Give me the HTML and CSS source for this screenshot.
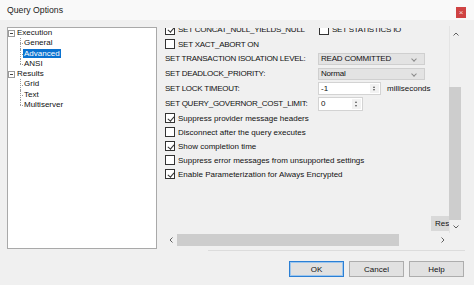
FILE: index.html
```html
<!DOCTYPE html>
<html lang="en">
<head>
    <meta charset="UTF-8">
    <title>Query Options</title>
    <link rel="stylesheet" href="styles.css">
</head>
<body>
<div class="window">

    <!-- title bar -->
    <div class="titlebar">
        <span class="title">Query Options</span>
        <span class="close">&#215;</span>
    </div>

    <div class="main">
        <!-- page tree -->
        <div class="tree">
            <div class="node"><span class="expander"></span>Execution</div>
            <div class="child">General</div>
            <div class="child"><span class="selected">Advanced</span></div>
            <div class="child last">ANSI</div>
            <div class="node"><span class="expander"></span>Results</div>
            <div class="child">Grid</div>
            <div class="child">Text</div>
            <div class="child last">Multiserver</div>
        </div>

        <!-- options page, scrolled a little -->
        <div class="options">
            <div class="viewport">
                <div class="clip">
                    <div class="page">
                        <div class="row pair">
                            <label class="check"><span class="box checked"></span><span class="lbl">SET CONCAT_NULL_YIELDS_NULL</span></label>
                            <label class="check"><span class="box"></span><span class="lbl">SET STATISTICS IO</span></label>
                        </div>
                        <div class="row first">
                            <label class="check"><span class="box"></span><span class="lbl">SET XACT_ABORT ON</span></label>
                        </div>

                        <div class="settings">
                            <span class="lbl">SET TRANSACTION ISOLATION LEVEL:</span>
                            <div class="select wide">READ COMMITTED<span class="chev"></span></div>

                            <span class="lbl">SET DEADLOCK_PRIORITY:</span>
                            <div class="select wide">Normal<span class="chev"></span></div>

                            <span class="lbl tall">SET LOCK TIMEOUT:</span>
                            <div class="spin-line tall">
                                <div class="spin timeout">-1<span class="spin-btn"></span></div>
                                <span class="unit">milliseconds</span>
                            </div>

                            <span class="lbl tall">SET QUERY_GOVERNOR_COST_LIMIT:</span>
                            <div class="spin-line tall">
                                <div class="spin cost">0<span class="spin-btn"></span></div>
                            </div>
                        </div>

                        <div class="row"><label class="check"><span class="box checked"></span>Suppress provider message headers</label></div>
                        <div class="row"><label class="check"><span class="box"></span>Disconnect after the query executes</label></div>
                        <div class="row"><label class="check"><span class="box checked"></span>Show completion time</label></div>
                        <div class="row"><label class="check"><span class="box"></span>Suppress error messages from unsupported settings</label></div>
                        <div class="row"><label class="check"><span class="box checked"></span>Enable Parameterization for Always Encrypted</label></div>

                        <div class="reset-row"><button class="reset">Reset</button></div>
                    </div>
                </div>
            </div>

            <div class="vscroll">
                <div class="arrow up"><svg width="6" height="4" viewBox="0 0 6 4"><polyline points="0.5,3.5 3,1 5.5,3.5" fill="none" stroke="#606060" stroke-width="1"/></svg></div>
                <div class="vtrack"><div class="vthumb"></div></div>
                <div class="arrow down"><svg width="6" height="4" viewBox="0 0 6 4"><polyline points="0.5,0.5 3,3 5.5,0.5" fill="none" stroke="#606060" stroke-width="1"/></svg></div>
            </div>

            <div class="hscroll">
                <div class="arrow"><svg width="4" height="6" viewBox="0 0 4 6"><polyline points="3.5,0.5 1,3 3.5,5.5" fill="none" stroke="#606060" stroke-width="1"/></svg></div>
                <div class="hthumb"></div>
                <div class="htrack"></div>
                <div class="arrow"><svg width="4" height="6" viewBox="0 0 4 6"><polyline points="0.5,0.5 3,3 0.5,5.5" fill="none" stroke="#606060" stroke-width="1"/></svg></div>
            </div>
        </div>
    </div>

    <!-- dialog buttons -->
    <div class="footer">
        <div class="separator"></div>
        <div class="buttons">
            <button class="btn default">OK</button>
            <button class="btn">Cancel</button>
            <button class="btn">Help</button>
        </div>
    </div>
</div>
</body>
</html>
```

FILE: styles.css
```css
body {
    margin: 0;
    background-color: #f0f0f0;
    font-family: "Liberation Sans", Arial, sans-serif;
    font-size: 8px;
    color: #111;
    overflow: hidden;
}

.window {
    width: 474px;
    height: 285px;
    display: flex;
    flex-direction: column;
}

/* title bar */
.titlebar {
    height: 20px;
    background-color: #f9f9f9;
    display: flex;
    align-items: center;
    justify-content: space-between;
    padding-left: 7px;
    padding-right: 8px;
}

.title {
    font-size: 8.7px;
    color: #222;
}

.close {
    width: 10px;
    height: 11px;
    margin-top: 5px;
    background-color: #cf4343;
    color: #f6d6d6;
    font-size: 8px;
    line-height: 11px;
    text-align: center;
}

.main {
    display: flex;
    padding-top: 6px;
    padding-left: 7px;
    height: 224px;
}

/* tree */
.tree {
    width: 150px;
    height: 222px;
    margin-top: 1px;
    background-color: #fff;
    border: 1px solid #a9a9a9;
    box-sizing: border-box;
}

.node,
.child {
    height: 10.3px;
    line-height: 10.3px;
    position: relative;
}

.node {
    padding-left: 9px;
}

.expander {
    position: absolute;
    left: 0;
    top: 2px;
    width: 5px;
    height: 5px;
    border: 1px solid #9a9a9a;
    background-color: #fff;
}

.expander::after {
    content: "";
    position: absolute;
    left: 1px;
    top: 2px;
    width: 3px;
    border-top: 1px solid #444;
}

.child {
    padding-left: 16px;
}

.child::before {
    content: "";
    position: absolute;
    left: 12px;
    top: 0;
    height: 100%;
    border-left: 1px dotted #9a9a9a;
}

.child.last::before {
    height: 50%;
}

.child::after {
    content: "";
    position: absolute;
    left: 12px;
    top: 50%;
    width: 3px;
    border-top: 1px dotted #9a9a9a;
}

.selected {
    background-color: #0a72d0;
    color: #fff;
    padding: 0 1px;
    margin-left: -1px;
    display: inline-block;
    height: 9.5px;
    line-height: 9.5px;
}

/* options page */
.options {
    margin-left: 8px;
    display: grid;
    grid-template-columns: 284px 12px;
    grid-template-rows: 207px 12px;
    row-gap: 1px;
}

.viewport {
    padding-top: 2px;
}

.clip {
    height: 205px;
    overflow: hidden;
}

.page {
    width: 420px;
    margin-top: -5.5px;
    white-space: nowrap;
}

.row {
    height: 14px;
    display: flex;
    align-items: center;
}

.row.first {
    margin-top: 0.5px;
}

.pair {
    display: grid;
    grid-template-columns: 154px auto;
    align-items: center;
}

.check {
    display: flex;
    align-items: center;
}

.box {
    width: 8px;
    height: 8px;
    border: 1px solid #333;
    background-color: #fff;
    margin-right: 3px;
    position: relative;
    flex-shrink: 0;
}

.box.checked::after {
    content: "";
    position: absolute;
    left: 2.5px;
    top: 0.5px;
    width: 2.5px;
    height: 5px;
    border-right: 1px solid #333;
    border-bottom: 1px solid #333;
    transform: rotate(40deg);
}

.lbl {
    letter-spacing: -0.25px;
}

.settings {
    display: grid;
    grid-template-columns: 153px auto;
    grid-auto-rows: 15px;
    align-items: center;
}

.settings .tall {
    height: 16px;
    display: flex;
    align-items: center;
}

.select {
    height: 12px;
    box-sizing: border-box;
    background-color: #e3e3e3;
    border: 1px solid #cfcfcf;
    padding-left: 2px;
    line-height: 10px;
    position: relative;
    letter-spacing: -0.2px;
}

.select.wide {
    width: 107px;
}

.chev {
    position: absolute;
    right: 8px;
    top: 3px;
    width: 3px;
    height: 3px;
    border-right: 1px solid #8a8a8a;
    border-bottom: 1px solid #8a8a8a;
    transform: rotate(45deg);
}

.spin-line {
    display: flex;
    align-items: center;
}

.spin {
    height: 13px;
    box-sizing: border-box;
    background-color: #fff;
    border: 1px solid #d3d3d3;
    padding-left: 2px;
    line-height: 11px;
    position: relative;
}

.spin.timeout {
    width: 63px;
}

.spin.cost {
    width: 45px;
    height: 14px;
}

.spin-btn {
    position: absolute;
    right: 1px;
    top: 1px;
    bottom: 1px;
    width: 9px;
    background-color: #f2f2f2;
}

.spin-btn::before,
.spin-btn::after {
    content: "";
    position: absolute;
    left: 3px;
    border-left: 1.5px solid transparent;
    border-right: 1.5px solid transparent;
}

.spin-btn::before {
    top: 2px;
    border-bottom: 2px solid #555;
}

.spin-btn::after {
    bottom: 2px;
    border-top: 2px solid #555;
}

.unit {
    margin-left: 6px;
}

.reset-row {
    margin-top: 35px;
    padding-left: 266px;
}

.reset {
    width: 52px;
    height: 15px;
    border: none;
    background-color: #d9d9d9;
    font-family: inherit;
    font-size: 8px;
    color: #111;
    text-align: left;
    padding: 0 0 0 4px;
}

/* scrollbars */
.vscroll {
    display: flex;
    flex-direction: column;
    border-left: 1px solid #e4e4e4;
    box-sizing: border-box;
}

.arrow {
    display: flex;
    align-items: center;
    justify-content: center;
}

.vscroll .up {
    height: 16px;
}

.vscroll .down {
    height: 12px;
}

.vtrack {
    flex: 1;
    padding-top: 45px;
}

.vthumb {
    height: 133px;
    margin-left: -1px;
    background-color: #cdcdcd;
}

.hscroll {
    display: flex;
}

.hscroll .arrow {
    width: 12px;
}

.hthumb {
    width: 222px;
    background-color: #cdcdcd;
}

.htrack {
    flex: 1;
}

/* footer */
.separator {
    margin-left: 208px;
    width: 257px;
    border-top: 1px solid #dcdcdc;
}

.buttons {
    display: flex;
    justify-content: flex-end;
    gap: 5px;
    padding-right: 10px;
    margin-top: 10px;
}

.btn {
    width: 55px;
    height: 16px;
    box-sizing: border-box;
    background-color: #e1e1e1;
    border: 1px solid #adadad;
    font-family: inherit;
    font-size: 8px;
    color: #111;
    padding: 0;
}

.btn.default {
    border: 1px solid #2b7fd4;
    box-shadow: inset 0 0 0 1px #9cc6ee;
}
```
